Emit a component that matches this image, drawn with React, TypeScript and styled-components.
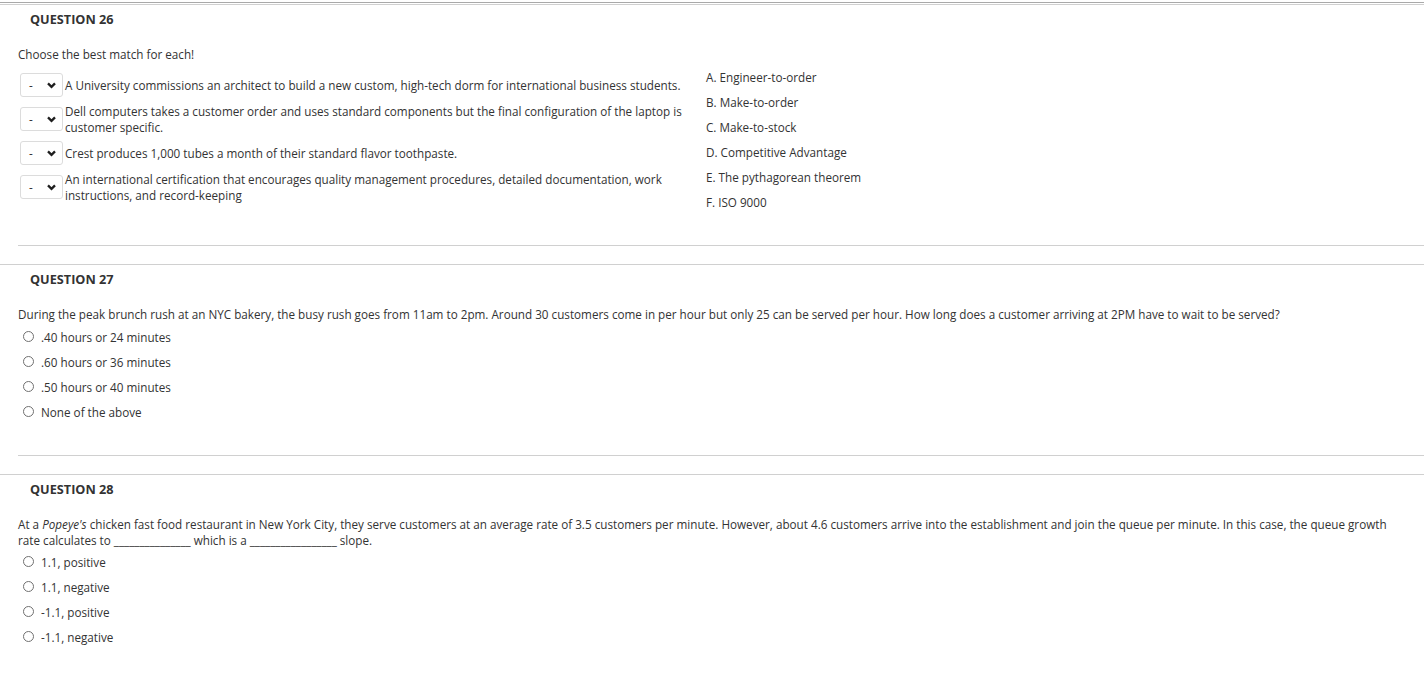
import React from "react";
import styled, { createGlobalStyle } from "styled-components";

const GlobalStyle = createGlobalStyle`
  body {
    margin: 0;
    padding: 0;
    background: #ffffff;
    font-family: 'Open Sans', 'Liberation Sans', sans-serif;
    font-size: 11.7px;
    line-height: 16px;
    color: #333333;
  }
`;

const TopRule = styled.div`
  margin-top: 2px;
  height: 1px;
  border-top: 1px solid #a9a9a9;
  border-bottom: 1px solid #d0d0d0;
`;

const Question = styled.section<{ $ruled?: boolean }>`
  border-top: ${(p) => (p.$ruled ? "1px solid #d0d0d0" : "none")};
`;

const Heading = styled.h3`
  margin: 6px 0 0 30px;
  font-size: 12.7px;
  line-height: 16px;
  font-weight: 700;
  color: #333333;
`;

const Body = styled.div`
  padding: 19px 30px 0 18px;
`;

const Prompt = styled.p`
  margin: 0;
`;

const Divider = styled.hr<{ $space: number }>`
  margin: ${(p) => p.$space}px 0 18px 18px;
  border: 0;
  border-top: 1px solid #d0d0d0;
  height: 0;
`;

const MatchArea = styled.div`
  display: flex;
  gap: 16px;
  margin-top: 3px;
`;

const MatchList = styled.div`
  width: 672px;
  padding-top: 8px;
  display: flex;
  flex-direction: column;
  gap: 6px;
`;

const MatchRow = styled.div`
  display: flex;
  align-items: center;
  gap: 2px;
  padding-left: 2px;
`;

const SelectBox = styled.div`
  flex: none;
  box-sizing: border-box;
  width: 43px;
  height: 24px;
  border: 1px solid #dcdcdc;
  border-radius: 3px;
  display: flex;
  align-items: center;
  justify-content: space-between;
  padding: 0 6px 0 8px;
  color: #333333;
`;

const MatchText = styled.span`
  flex: 1;
`;

const AnswerList = styled.ol`
  list-style: none;
  margin: 0;
  padding: 0;
`;

const Answer = styled.li`
  line-height: 25px;
`;

const Options = styled.div<{ $offset: number }>`
  margin-top: ${(p) => p.$offset}px;
`;

const Option = styled.label`
  display: flex;
  align-items: center;
  height: 25px;
  gap: 7px;
`;

const Radio = styled.span`
  box-sizing: border-box;
  width: 11px;
  height: 11px;
  margin-left: 5px;
  border: 1px solid #707070;
  border-radius: 50%;
  background: #ffffff;
`;

const Chevron = () => (
  <svg width="9" height="7" viewBox="0 0 9 7">
    <path d="M1 1.4 L4.5 4.9 L8 1.4" fill="none" stroke="#1e1e1e" strokeWidth="2.3" />
  </svg>
);

const matches = [
  "A University commissions an architect to build a new custom, high-tech dorm for international business students.",
  "Dell computers takes a customer order and uses standard components but the final configuration of the laptop is customer specific.",
  "Crest produces 1,000 tubes a month of their standard flavor toothpaste.",
  "An international certification that encourages quality management procedures, detailed documentation, work instructions, and record-keeping",
];

const answers = [
  "A. Engineer-to-order",
  "B. Make-to-order",
  "C. Make-to-stock",
  "D. Competitive Advantage",
  "E. The pythagorean theorem",
  "F. ISO 9000",
];

const q27 = [".40 hours or 24 minutes", ".60 hours or 36 minutes", ".50 hours or 40 minutes", "None of the above"];
const q28 = ["1.1, positive", "1.1, negative", "-1.1, positive", "-1.1, negative"];

const App = () => {
  return (
    <div>
      <GlobalStyle />
      <TopRule />
      <Question>
        <Heading>QUESTION 26</Heading>
        <Body>
          <Prompt>Choose the best match for each!</Prompt>
          <MatchArea>
            <MatchList>
              {matches.map((m) => (
                <MatchRow key={m}>
                  <SelectBox>
                    <span>-</span>
                    <Chevron />
                  </SelectBox>
                  <MatchText>{m}</MatchText>
                </MatchRow>
              ))}
            </MatchList>
            <AnswerList>
              {answers.map((a) => (
                <Answer key={a}>{a}</Answer>
              ))}
            </AnswerList>
          </MatchArea>
        </Body>
        <Divider $space={30} />
      </Question>
      <Question $ruled>
        <Heading>QUESTION 27</Heading>
        <Body>
          <Prompt>
            During the peak brunch rush at an NYC bakery, the busy rush goes from 11am to 2pm. Around 30 customers come in
            per hour but only 25 can be served per hour. How long does a customer arriving at 2PM have to wait to be served?
          </Prompt>
          <Options $offset={2}>
            {q27.map((o) => (
              <Option key={o}>
                <Radio />
                {o}
              </Option>
            ))}
          </Options>
        </Body>
        <Divider $space={31} />
      </Question>
      <Question $ruled>
        <Heading>QUESTION 28</Heading>
        <Body>
          <Prompt>
            At a <em>Popeye's</em> chicken fast food restaurant in New York City, they serve customers at an average rate of
            3.5 customers per minute. However, about 4.6 customers arrive into the establishment and join the queue per
            minute. In this case, the queue growth rate calculates to _______________ which is a _________________ slope.
          </Prompt>
          <Options $offset={1}>
            {q28.map((o) => (
              <Option key={o}>
                <Radio />
                {o}
              </Option>
            ))}
          </Options>
        </Body>
        <Divider $space={31} />
      </Question>
    </div>
  );
};

export default App;
